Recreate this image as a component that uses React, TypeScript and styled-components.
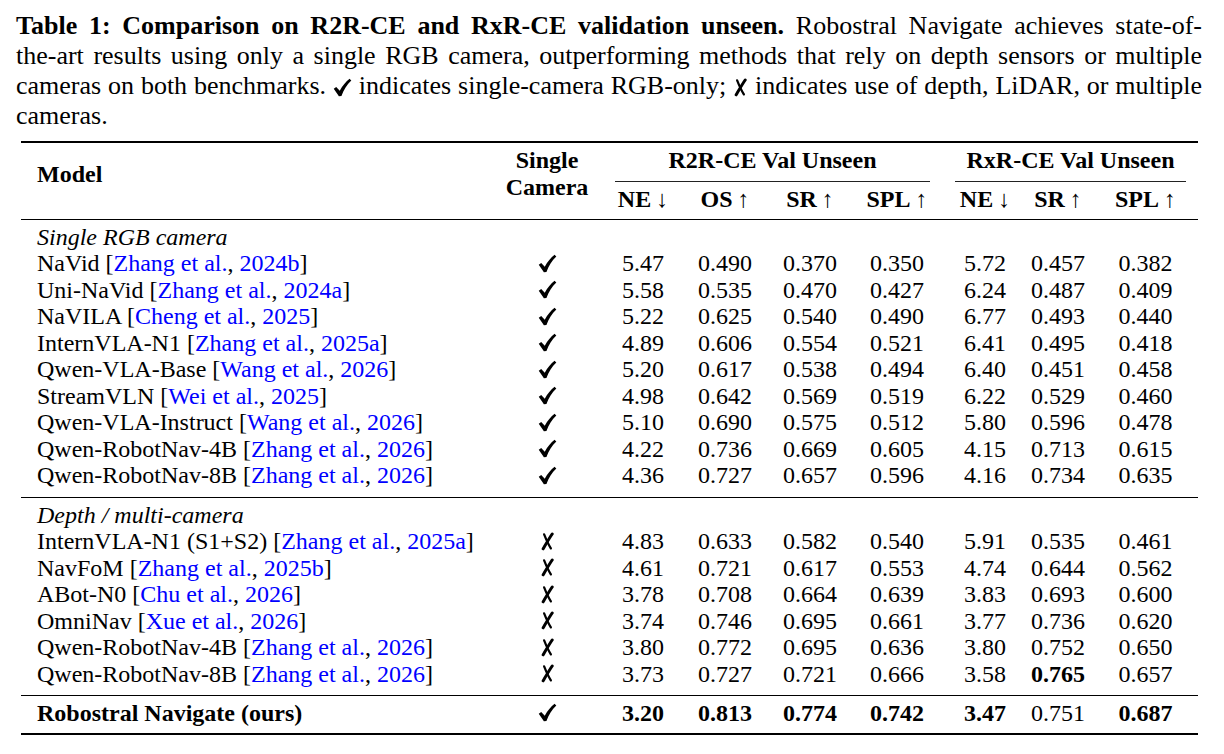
import React from 'react'
import styled, { createGlobalStyle } from 'styled-components'

type Cite = { who: string; year: string }
type Row = {
  name: string
  cite?: Cite
  single: boolean
  values: string[]
  bold?: number[]
  strong?: boolean
}

const COLS = '464px 124px 68px 96px 74px 100px 76px 70px 105px'

const singleRows: Row[] = [
  { name: 'NaVid', cite: { who: 'Zhang et al.', year: '2024b' }, single: true, values: ['5.47', '0.490', '0.370', '0.350', '5.72', '0.457', '0.382'] },
  { name: 'Uni-NaVid', cite: { who: 'Zhang et al.', year: '2024a' }, single: true, values: ['5.58', '0.535', '0.470', '0.427', '6.24', '0.487', '0.409'] },
  { name: 'NaVILA', cite: { who: 'Cheng et al.', year: '2025' }, single: true, values: ['5.22', '0.625', '0.540', '0.490', '6.77', '0.493', '0.440'] },
  { name: 'InternVLA-N1', cite: { who: 'Zhang et al.', year: '2025a' }, single: true, values: ['4.89', '0.606', '0.554', '0.521', '6.41', '0.495', '0.418'] },
  { name: 'Qwen-VLA-Base', cite: { who: 'Wang et al.', year: '2026' }, single: true, values: ['5.20', '0.617', '0.538', '0.494', '6.40', '0.451', '0.458'] },
  { name: 'StreamVLN', cite: { who: 'Wei et al.', year: '2025' }, single: true, values: ['4.98', '0.642', '0.569', '0.519', '6.22', '0.529', '0.460'] },
  { name: 'Qwen-VLA-Instruct', cite: { who: 'Wang et al.', year: '2026' }, single: true, values: ['5.10', '0.690', '0.575', '0.512', '5.80', '0.596', '0.478'] },
  { name: 'Qwen-RobotNav-4B', cite: { who: 'Zhang et al.', year: '2026' }, single: true, values: ['4.22', '0.736', '0.669', '0.605', '4.15', '0.713', '0.615'] },
  { name: 'Qwen-RobotNav-8B', cite: { who: 'Zhang et al.', year: '2026' }, single: true, values: ['4.36', '0.727', '0.657', '0.596', '4.16', '0.734', '0.635'] },
]

const depthRows: Row[] = [
  { name: 'InternVLA-N1 (S1+S2)', cite: { who: 'Zhang et al.', year: '2025a' }, single: false, values: ['4.83', '0.633', '0.582', '0.540', '5.91', '0.535', '0.461'] },
  { name: 'NavFoM', cite: { who: 'Zhang et al.', year: '2025b' }, single: false, values: ['4.61', '0.721', '0.617', '0.553', '4.74', '0.644', '0.562'] },
  { name: 'ABot-N0', cite: { who: 'Chu et al.', year: '2026' }, single: false, values: ['3.78', '0.708', '0.664', '0.639', '3.83', '0.693', '0.600'] },
  { name: 'OmniNav', cite: { who: 'Xue et al.', year: '2026' }, single: false, values: ['3.74', '0.746', '0.695', '0.661', '3.77', '0.736', '0.620'] },
  { name: 'Qwen-RobotNav-4B', cite: { who: 'Zhang et al.', year: '2026' }, single: false, values: ['3.80', '0.772', '0.695', '0.636', '3.80', '0.752', '0.650'] },
  { name: 'Qwen-RobotNav-8B', cite: { who: 'Zhang et al.', year: '2026' }, single: false, values: ['3.73', '0.727', '0.721', '0.666', '3.58', '0.765', '0.657'], bold: [5] },
]

const ours: Row = {
  name: 'Robostral Navigate (ours)',
  single: true,
  strong: true,
  values: ['3.20', '0.813', '0.774', '0.742', '3.47', '0.751', '0.687'],
  bold: [0, 1, 2, 3, 4, 6],
}

const metrics = [
  { label: 'NE', down: true },
  { label: 'OS', down: false },
  { label: 'SR', down: false },
  { label: 'SPL', down: false },
  { label: 'NE', down: true },
  { label: 'SR', down: false },
  { label: 'SPL', down: false },
]

const GlobalStyle = createGlobalStyle`
  html, body {
    margin: 0;
    background: #fff;
  }
  body {
    font-family: 'Liberation Serif', 'Times New Roman', serif;
    color: #000;
  }
`

const Page = styled.div`
  width: 1224px;
  padding: 11.4px 0 0 16px;
  box-sizing: border-box;
`

const Caption = styled.div`
  width: 1186px;
  font-size: 26px;
  line-height: 29.7px;

  b {
    font-weight: bold;
  }
`

// one block per typeset line, so the breaks land where the paper put them
const CaptionLine = styled.span<{ $last?: boolean }>`
  display: block;
  word-spacing: -1px;
  text-align: ${(p) => (p.$last ? 'left' : 'justify')};
  text-align-last: ${(p) => (p.$last ? 'left' : 'justify')};
`

const Table = styled.div`
  margin: 10.8px 0 0 5px;
  width: 1177px;
  font-size: 24px;
  line-height: 26.5px;
`

const Section = styled.div<{ $top: number; $pb: number; $bottom?: boolean }>`
  display: grid;
  grid-template-columns: ${COLS};
  border-top: ${(p) => p.$top}px solid #000;
  border-bottom: ${(p) => (p.$bottom ? '2px solid #000' : 'none')};
  padding: 4px 0 ${(p) => p.$pb}px;
`

const HeadModel = styled.div`
  grid-column: 1;
  grid-row: 1 / 3;
  padding: 13.5px 0 0 16px;
  font-weight: bold;
`

const HeadSingle = styled.div`
  grid-column: 2;
  grid-row: 1 / 3;
  text-align: center;
  font-weight: bold;
`

const Group = styled.div<{ $from: number; $to: number; $ml: number; $mr: number }>`
  grid-row: 1;
  grid-column: ${(p) => p.$from} / ${(p) => p.$to};
  margin: 0 ${(p) => p.$mr}px 0 ${(p) => p.$ml}px;
  padding-bottom: 7px;
  border-bottom: 1px solid #222;
  text-align: center;
  font-weight: bold;
  white-space: nowrap;
`

const Metric = styled.div`
  grid-row: 2;
  padding-top: 4px;
  text-align: center;
  font-weight: bold;
  white-space: nowrap;
`

const Arrow = styled.span`
  font-weight: normal;
  margin-left: 5px;
`

const GroupTitle = styled.div`
  grid-column: 1 / -1;
  padding-left: 16px;
  font-style: italic;
`

const ModelCell = styled.div<{ $strong?: boolean }>`
  padding-left: 16px;
  white-space: nowrap;
  font-weight: ${(p) => (p.$strong ? 'bold' : 'normal')};
`

const MarkCell = styled.div`
  display: flex;
  justify-content: center;
  align-items: center;
`

const Num = styled.div<{ $bold?: boolean }>`
  text-align: center;
  font-weight: ${(p) => (p.$bold ? 'bold' : 'normal')};
`

const Link = styled.span`
  color: #0000ff;
`

const MarkSvg = styled.svg<{ $inline?: boolean }>`
  display: inline-block;
  vertical-align: ${(p) => (p.$inline ? '-3px' : 'middle')};
`

const Check = ({ inline }: { inline?: boolean }) => (
  <MarkSvg $inline={inline} width="19" height="19" viewBox="0 0 20 20">
    <path
      d="M0.8 11.4 L3.4 9.6 L7.1 13.4 C9.8 8.4 13.2 4.2 17.4 0.8 L19.3 2.6 C14.6 7 11.3 12.2 8.9 18.9 L6.2 19.2 Z"
      fill="#000"
    />
  </MarkSvg>
)

const Cross = ({ inline }: { inline?: boolean }) => (
  <MarkSvg $inline={inline} width="15" height="19" viewBox="0 0 16 20">
    <path d="M13 2 C9.8 6.6 7 11.6 3.4 17.8" stroke="#000" strokeWidth="3.2" fill="none" strokeLinecap="round" />
    <path d="M4.4 2.4 C6.4 7.4 8.6 12.6 11.6 17.4" stroke="#000" strokeWidth="2.4" fill="none" strokeLinecap="round" />
  </MarkSvg>
)

const DataRow = ({ row }: { row: Row }) => (
  <>
    <ModelCell $strong={row.strong}>
      {row.name}
      {row.cite && (
        <>
          {' ['}
          <Link>{row.cite.who}</Link>, <Link>{row.cite.year}</Link>]
        </>
      )}
    </ModelCell>
    <MarkCell>{row.single ? <Check /> : <Cross />}</MarkCell>
    {row.values.map((v, i) => (
      <Num key={i} $bold={row.bold?.includes(i)}>
        {v}
      </Num>
    ))}
  </>
)

export default function App() {
  return (
    <Page>
      <GlobalStyle />
      <Caption>
        <CaptionLine>
          <b>Table 1: Comparison on R2R-CE and RxR-CE validation unseen.</b> Robostral Navigate achieves state-of-
        </CaptionLine>
        <CaptionLine>
          the-art results using only a single RGB camera, outperforming methods that rely on depth sensors or multiple
        </CaptionLine>
        <CaptionLine>
          cameras on both benchmarks. <Check inline /> indicates single-camera RGB-only; <Cross inline /> indicates use
          of depth, LiDAR, or multiple
        </CaptionLine>
        <CaptionLine $last>cameras.</CaptionLine>
      </Caption>

      <Table>
        <Section $top={2} $pb={6.5}>
          <HeadModel>Model</HeadModel>
          <HeadSingle>
            Single
            <br />
            Camera
          </HeadSingle>
          <Group $from={3} $to={7} $ml={6} $mr={17}>
            R2R-CE Val Unseen
          </Group>
          <Group $from={7} $to={10} $ml={8} $mr={12}>
            RxR-CE Val Unseen
          </Group>
          {metrics.map((m, i) => (
            <Metric key={i} style={{ gridColumn: i + 3 }}>
              {m.label}
              <Arrow>{m.down ? '↓' : '↑'}</Arrow>
            </Metric>
          ))}
        </Section>

        <Section $top={1} $pb={8}>
          <GroupTitle>Single RGB camera</GroupTitle>
          {singleRows.map((r, i) => (
            <DataRow key={i} row={r} />
          ))}
        </Section>

        <Section $top={1} $pb={7.5}>
          <GroupTitle>Depth / multi-camera</GroupTitle>
          {depthRows.map((r, i) => (
            <DataRow key={i} row={r} />
          ))}
        </Section>

        <Section $top={1} $pb={6.5} $bottom>
          <DataRow row={ours} />
        </Section>
      </Table>
    </Page>
  )
}
